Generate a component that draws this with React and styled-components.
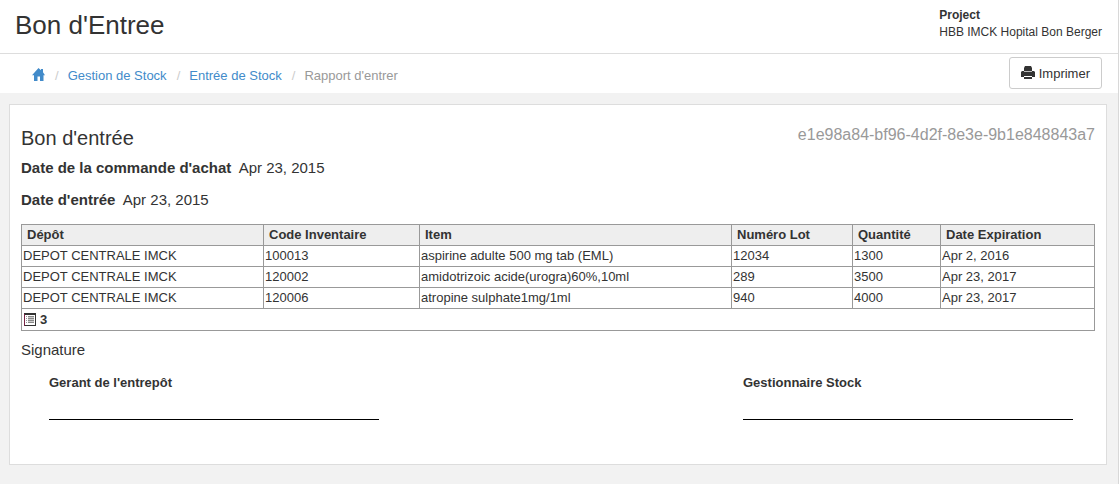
import React from 'react';
import styled, { createGlobalStyle } from 'styled-components';

const GlobalStyle = createGlobalStyle`
  *, *::before, *::after { box-sizing: border-box; }
  html { background: #f2f2f2; }
  body {
    margin: 0;
    font-family: "Liberation Sans", Arial, sans-serif;
    font-size: 13px;
    line-height: 18px;
    color: #333;
  }
`;

const Page = styled.div`
  min-height: 100vh;
  border-right: 1px solid #d8d8d8;
`;

const Header = styled.header`
  display: flex;
  justify-content: space-between;
  align-items: flex-start;
  padding: 7px 16px 9px 15px;
  background: #fff;
  border-bottom: 1px solid #ddd;
`;

const PageTitle = styled.h1`
  margin: 0;
  font-size: 26px;
  font-weight: 400;
  line-height: 37px;
`;

const Project = styled.div`
  font-size: 12px;
  line-height: 17px;
`;

const ProjectLabel = styled.strong`
  display: block;
`;

const Toolbar = styled.div`
  display: flex;
  justify-content: space-between;
  align-items: center;
  padding: 3px 16px 4px 31px;
  background: #fff;
`;

const Crumbs = styled.ol`
  display: flex;
  align-items: center;
  margin: 0;
  padding: 6px 0 0;
  list-style: none;
`;

const Crumb = styled.li`
  display: flex;
  align-items: center;
  color: #999;

  & + &::before {
    content: "/";
    padding: 0 9px 0 10px;
    color: #ccc;
  }
`;

const CrumbLink = styled.a`
  display: flex;
  color: #428bca;
  text-decoration: none;
`;

const PrintButton = styled.button`
  display: flex;
  align-items: center;
  gap: 4px;
  height: 32px;
  padding: 2px 11px 0;
  border: 1px solid #ccc;
  border-radius: 3px;
  background: #fff;
  color: #333;
  font: inherit;
  cursor: pointer;
`;

const Icon = styled.svg`
  display: block;
  margin-bottom: 2px;
`;

const Panel = styled.main`
  margin: 11px 11px 19px 9px;
  padding: 19px 11px 44px;
  border: 1px solid #ddd;
  background: #fff;
`;

const PanelHead = styled.div`
  display: flex;
  justify-content: space-between;
  align-items: flex-start;
`;

const PanelTitle = styled.h2`
  margin: 0;
  font-size: 20px;
  font-weight: 400;
  line-height: 28px;
`;

const Reference = styled.span`
  font-size: 16px;
  line-height: 22px;
  color: #999;
`;

const Detail = styled.p`
  margin: 0;
  padding: 5px 0;
  font-size: 15px;
  line-height: 22px;
`;

const DetailLabel = styled.strong`
  margin-right: 4px;
`;

const Table = styled.table`
  width: 100%;
  margin-top: 8px;
  border-collapse: collapse;
  table-layout: fixed;
`;

const Col = styled.col`
  width: ${(p) => p.$width};
`;

const Th = styled.th`
  height: 21px;
  padding: 0 5px;
  border: 1px solid #999;
  background: #eee;
  text-align: left;
`;

const Td = styled.td`
  height: 21px;
  padding: 0 1px;
  border: 1px solid #999;
`;

const TotalCell = styled(Td)`
  height: 22px;
  padding: 0 2px;
  font-weight: 700;
`;

const Total = styled.span`
  display: flex;
  align-items: center;
  gap: 4px;
`;

const SignatureTitle = styled.p`
  margin: 8px 0 0;
  font-size: 15px;
  line-height: 22px;
`;

const Signatures = styled.div`
  display: flex;
  justify-content: space-between;
  padding: 13px 22px 0 28px;
`;

const Signatory = styled.div`
  width: 330px;
  height: 46px;
  border-bottom: 1px solid #000;
  font-weight: 700;
`;

const HomeIcon = () => (
  <Icon width="14" height="14" viewBox="0 0 14 14" fill="currentColor" role="img" aria-label="Accueil">
    <path d="M7.500 0 10 2.300V1h2v3.200L14 7.200H12.500V13H9V8.500H6.500V13H3V7.200H1L7.500 0Z" />
  </Icon>
);

const PrintIcon = () => (
  <Icon width="14" height="14" viewBox="0 0 14 14" aria-hidden="true">
    <path fill="#333" d="M4 0h6l1 2v3H3V2z" />
    <path fill="#333" d="M1 5h12l1 1v5h-3v-1H3v1H0V6z" />
    <path fill="#bbb" d="M3 5h8v1H3z" />
    <path fill="#333" d="M3 11h8v2H3z" />
  </Icon>
);

const ListIcon = () => (
  <svg width="12" height="13" viewBox="0 0 12 13" aria-hidden="true">
    <path fill="#333" d="M0 0h12v13H0z" />
    <path fill="#fff" d="M1 2h10v10H1z" />
    <path fill="#724" d="M0 1h1v12H0z" />
    <path fill="#999" d="M2 3h1v1H2zM2 5h1v1H2zM2 7h1v1H2zM2 9h1v1H2z" />
    <path fill="#888" d="M4 3h6v7H4z" />
    <path fill="#ccc" d="M4 4h6v1H4zM4 6h6v1H4zM4 8h6v1H4z" />
  </svg>
);

const columns = [
  ['Dépôt', '242px'],
  ['Code Inventaire', '156px'],
  ['Item', 'auto'],
  ['Numéro Lot', '121px'],
  ['Quantité', '88px'],
  ['Date Expiration', '154px'],
];

const rows = [
  ['DEPOT CENTRALE IMCK', '100013', 'aspirine adulte 500 mg tab (EML)', '12034', '1300', 'Apr 2, 2016'],
  ['DEPOT CENTRALE IMCK', '120002', 'amidotrizoic acide(urogra)60%,10ml', '289', '3500', 'Apr 23, 2017'],
  ['DEPOT CENTRALE IMCK', '120006', 'atropine sulphate1mg/1ml', '940', '4000', 'Apr 23, 2017'],
];

export default function App() {
  return (
    <Page>
      <GlobalStyle />
      <Header>
        <PageTitle>Bon d'Entree</PageTitle>
        <Project>
          <ProjectLabel>Project</ProjectLabel>
          HBB IMCK Hopital Bon Berger
        </Project>
      </Header>
      <Toolbar>
        <nav>
          <Crumbs>
            <Crumb><CrumbLink href="#/"><HomeIcon /></CrumbLink></Crumb>
            <Crumb><CrumbLink href="#/stock">Gestion de Stock</CrumbLink></Crumb>
            <Crumb><CrumbLink href="#/stock/entry">Entrée de Stock</CrumbLink></Crumb>
            <Crumb>Rapport d'entrer</Crumb>
          </Crumbs>
        </nav>
        <PrintButton type="button"><PrintIcon />Imprimer</PrintButton>
      </Toolbar>
      <Panel>
        <PanelHead>
          <PanelTitle>Bon d'entrée</PanelTitle>
          <Reference>e1e98a84-bf96-4d2f-8e3e-9b1e848843a7</Reference>
        </PanelHead>
        <Detail><DetailLabel>Date de la commande d'achat</DetailLabel> Apr 23, 2015</Detail>
        <Detail><DetailLabel>Date d'entrée</DetailLabel> Apr 23, 2015</Detail>
        <Table>
          <colgroup>
            {columns.map(([name, width]) => <Col key={name} $width={width} />)}
          </colgroup>
          <thead>
            <tr>{columns.map(([name]) => <Th key={name} scope="col">{name}</Th>)}</tr>
          </thead>
          <tbody>
            {rows.map((row) => (
              <tr key={row[1]}>{row.map((value, i) => <Td key={i}>{value}</Td>)}</tr>
            ))}
          </tbody>
          <tfoot>
            <tr>
              <TotalCell colSpan={6}><Total><ListIcon />3</Total></TotalCell>
            </tr>
          </tfoot>
        </Table>
        <SignatureTitle>Signature</SignatureTitle>
        <Signatures>
          <Signatory>Gerant de l'entrepôt</Signatory>
          <Signatory>Gestionnaire Stock</Signatory>
        </Signatures>
      </Panel>
    </Page>
  );
}
